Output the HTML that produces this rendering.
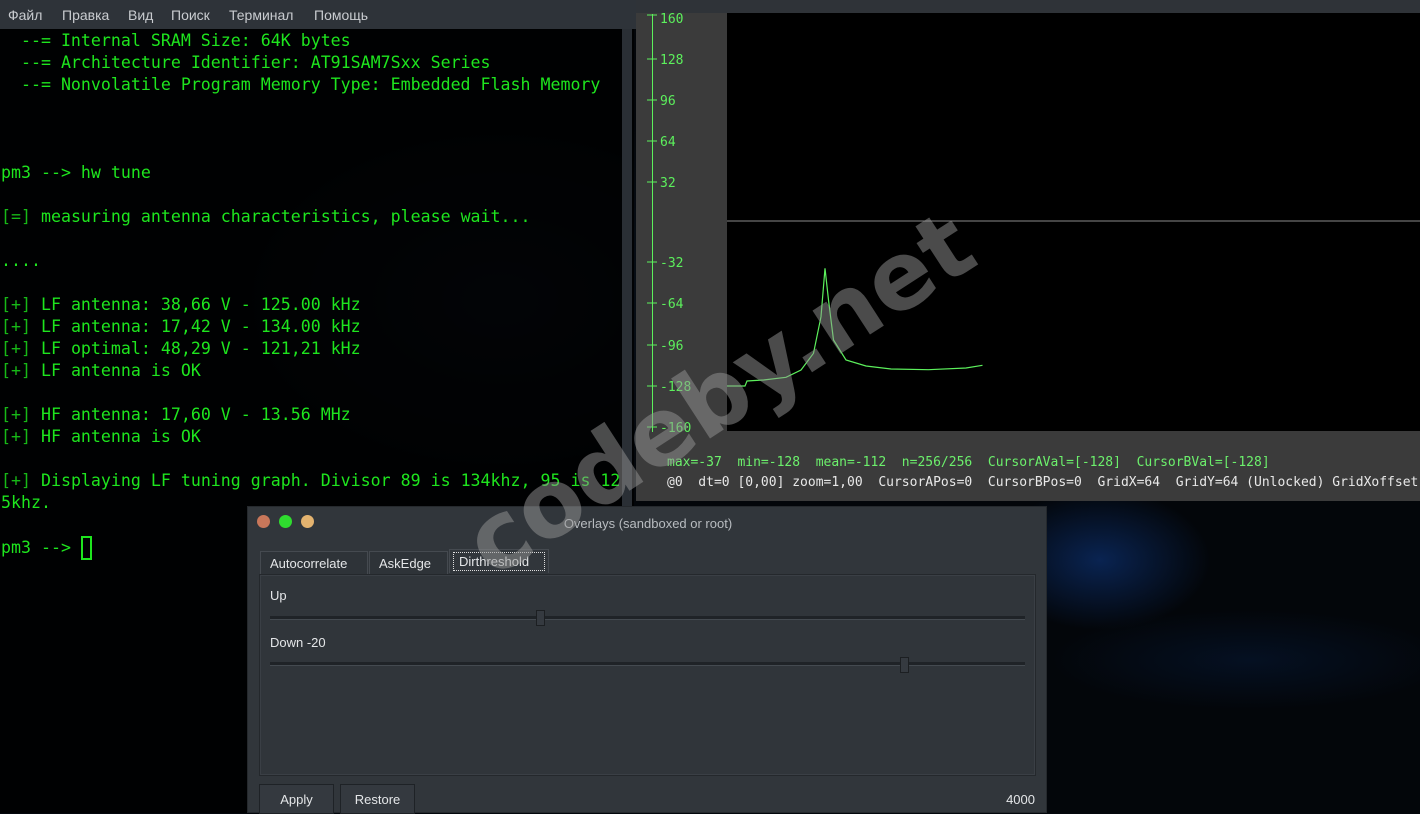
<!DOCTYPE html>
<html><head><meta charset="utf-8"><style>
*{margin:0;padding:0;box-sizing:border-box}
body{width:1420px;height:813px;overflow:hidden;position:relative;background:#03070c;font-family:"Liberation Sans","DejaVu Sans",sans-serif}
.bg{position:absolute;left:0;top:0;width:1420px;height:813px;background:
radial-gradient(ellipse 110px 70px at 1100px 560px,rgba(15,60,140,.55),transparent),
radial-gradient(ellipse 200px 50px at 1250px 660px,rgba(10,40,90,.3),transparent),
radial-gradient(ellipse 300px 200px at 500px 300px,rgba(20,35,55,.45),transparent),
#03060a}
.menu{position:absolute;left:0;top:0;width:636px;height:29px;background:#2e3339;color:#c9ccd0;font-size:14px}
.menu span{position:absolute;top:7px}
.term{position:absolute;left:1px;top:30px;font-family:"DejaVu Sans Mono","Liberation Mono",monospace;font-size:16.6px;line-height:22px;color:#1ee51e;white-space:pre}
.term b{font-weight:normal;color:#17b817}
.sb{position:absolute;left:622px;top:29px;width:10px;height:480px;background:#2a2f35}
.pw{position:absolute;left:636px;top:0;width:784px;height:501px;background:#3b3b3b}
.pw .top{position:absolute;left:0;top:0;width:784px;height:13px;background:#2f3338}
.plot{position:absolute;left:91px;top:13px;width:693px;height:418px;background:#000}
.mono{font-family:"DejaVu Sans Mono","Liberation Mono",monospace}
.st{position:absolute;left:31px;font-size:13px;white-space:pre;color:#6cf06c}
.dlg{position:absolute;left:247px;top:506px;width:800px;height:307px;background:#31363b;color:#e4e6e8;font-size:13px;border:1px solid #25292d}
.dot{position:absolute;top:8px;width:13px;height:13px;border-radius:50%}
.tab{position:absolute;top:44px;height:24px;border:1px solid #454a50;border-bottom:none;padding:4px 0 0 9px;background:#2e3338}
.panel{position:absolute;left:11px;top:67px;width:777px;height:202px;border:1px solid #24282c;background:#30353a;box-shadow:inset 0 0 0 1px #3a3f45}
.track{position:absolute;height:4px;left:10px;width:755px;background:#1f2327;border-bottom:1px solid #444a50}
.hd{position:absolute;width:9px;height:16px;background:#353a40;border:1px solid #1c1f22}
.btn{position:absolute;top:277px;height:30px;border:1px solid #1e2226;background:#34393f;text-align:center;padding-top:7px}
</style></head><body>
<div class="bg"></div>
<div style="position:absolute;left:0;top:29px;width:634px;height:784px;background:rgba(0,0,0,.78)"></div>
<div class="menu"><span style="left:8px">Файл</span><span style="left:62px">Правка</span><span style="left:128px">Вид</span><span style="left:171px">Поиск</span><span style="left:229px">Терминал</span><span style="left:314px">Помощь</span></div>
<div class="sb"></div>
<div class="term">  --= Internal SRAM Size: 64K bytes
  --= Architecture Identifier: AT91SAM7Sxx Series
  --= Nonvolatile Program Memory Type: Embedded Flash Memory



pm3 --> hw tune

<b>[=]</b> measuring antenna characteristics, please wait...

....

<b>[+]</b> LF antenna: 38,66 V - 125.00 kHz
<b>[+]</b> LF antenna: 17,42 V - 134.00 kHz
<b>[+]</b> LF optimal: 48,29 V - 121,21 kHz
<b>[+]</b> LF antenna is OK

<b>[+]</b> HF antenna: 17,60 V - 13.56 MHz
<b>[+]</b> HF antenna is OK

<b>[+]</b> Displaying LF tuning graph. Divisor 89 is 134khz, 95 is 12
5khz.

pm3 --> <span style="display:inline-block;width:11px;height:24px;border:2px solid #1ee51e;vertical-align:-7px"></span></div>

<div class="pw"><div class="top"></div><div class="plot"></div>
<svg style="position:absolute;left:0;top:0" width="784" height="501">
<line x1="91" y1="221" x2="784" y2="221" stroke="#8a8a8a"/>
<g stroke="#5cf05c" fill="none"><line x1="16.5" y1="14" x2="16.5" y2="432"/>
<line x1="11" y1="15" x2="21" y2="15"/><line x1="11" y1="59" x2="21" y2="59"/><line x1="11" y1="100" x2="21" y2="100"/><line x1="11" y1="141" x2="21" y2="141"/><line x1="11" y1="182" x2="21" y2="182"/><line x1="11" y1="262" x2="21" y2="262"/><line x1="11" y1="303" x2="21" y2="303"/><line x1="11" y1="345" x2="21" y2="345"/><line x1="11" y1="386" x2="21" y2="386"/><line x1="11" y1="427" x2="21" y2="427"/>
<polyline stroke-width="1.2" points="91,386 109,386 111,381 127.5,380 150,377.3 165,370 177.5,353.3 185,316.7 189,268.3 192.5,300 197.5,340 210,360 230,366 255,369 292.5,369.7 330,368 346.5,365.3"/></g>
<g fill="#5cf05c" font-family="DejaVu Sans Mono,Liberation Mono,monospace" font-size="13">
<text x="24" y="23">160</text><text x="24" y="64">128</text><text x="24" y="105">96</text><text x="24" y="146">64</text><text x="24" y="187">32</text><text x="24" y="267">-32</text><text x="24" y="308">-64</text><text x="24" y="350">-96</text><text x="24" y="391">-128</text><text x="24" y="432">-160</text></g></svg>
<div class="st mono" style="top:455px">max=-37  min=-128  mean=-112  n=256/256  CursorAVal=[-128]  CursorBVal=[-128]</div>
<div class="st mono" style="top:475px;color:#e8e8e8">@0  dt=0 [0,00] zoom=1,00  CursorAPos=0  CursorBPos=0  GridX=64  GridY=64 (Unlocked) GridXoffset</div>
</div>

<div class="dlg">
<div class="dot" style="left:9px;background:#c8775a"></div><div class="dot" style="left:31px;background:#2fdc2f"></div><div class="dot" style="left:53px;background:#e3b36f"></div>
<div style="position:absolute;left:0;width:800px;top:9px;text-align:center;color:#b8bcc0">Overlays (sandboxed or root)</div>
<div class="tab" style="left:12px;width:108px">Autocorrelate</div>
<div class="tab" style="left:121px;width:79px">AskEdge</div>
<div class="tab" style="left:201px;width:100px;top:42px;padding:2px 3px 0 3px;background:#31363b"><div style="border:1px dotted #ddd;padding:1px 5px">Dirthreshold</div></div>
<div class="panel">
<div style="position:absolute;left:10px;top:13px">Up</div>
<div class="track" style="top:41px"></div><div class="hd" style="left:276px;top:35px"></div>
<div style="position:absolute;left:10px;top:60px">Down  -20</div>
<div class="track" style="top:87px"></div><div class="hd" style="left:640px;top:82px"></div>
</div>
<div class="btn" style="left:11px;width:75px">Apply</div>
<div class="btn" style="left:92px;width:75px">Restore</div>
<div style="position:absolute;right:11px;top:285px">4000</div>
</div>

<div style="position:absolute;left:420px;top:345px;width:600px;text-align:center;font:bold 94px 'DejaVu Sans','Liberation Sans',sans-serif;color:rgba(150,150,150,.5);transform:rotate(-33deg);transform-origin:center;white-space:nowrap;line-height:100px">codeby.net</div>
</body></html>
